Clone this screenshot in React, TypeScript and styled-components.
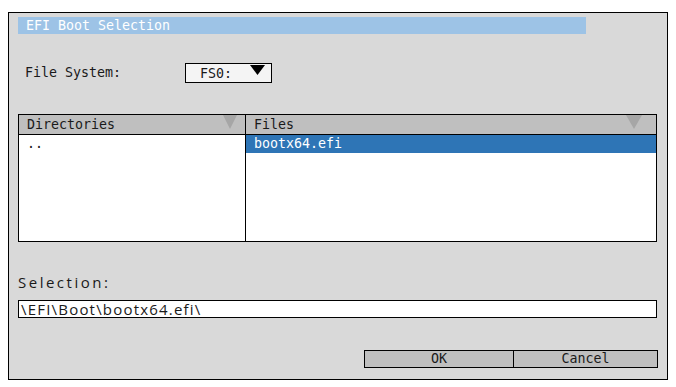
import styled, { createGlobalStyle } from 'styled-components';

const GlobalStyle = createGlobalStyle`
	html, body {
		margin: 0;
		padding: 0;
		background: #ffffff;
	}
	body {
		font-family: "DejaVu Sans Mono", monospace;
	}
`;

const Page = styled.div`
	padding: 12px 8px;
`;

const Dialog = styled.div`
	box-sizing: border-box;
	width: 660px;
	height: 368px;
	border: 1px solid #000;
	background: #d9d9d9;
	padding: 4px 10px 0 9px;
	display: flex;
	flex-direction: column;
	font-family: "DejaVu Sans Mono", monospace;
	font-size: 13.3px;
	color: #1a1a1a;
`;

const TitleBar = styled.div`
	width: 568px;
	height: 17px;
	line-height: 17px;
	background: #9dc3e6;
	color: #fff;
	padding-left: 8px;
	box-sizing: border-box;
`;

const FieldRow = styled.div`
	margin-top: 29px;
	height: 20px;
	display: flex;
	align-items: center;
	padding-left: 7px;
`;

const FieldLabel = styled.span`
	width: 160px;
	line-height: 20px;
`;

const Dropdown = styled.div`
	box-sizing: border-box;
	width: 87px;
	height: 20px;
	border: 1px solid #000;
	background: #f4f4f4;
	display: flex;
	align-items: flex-start;
	padding-left: 14px;
	line-height: 20px;
	gap: 18px;
`;

const Arrow = styled.svg`
	margin-top: 1px;
	flex: none;
`;

const Lists = styled.div`
	margin-top: 31px;
	box-sizing: border-box;
	width: 639px;
	height: 128px;
	border: 1px solid #000;
	background: #fff;
	display: grid;
	grid-template-columns: 227px 1fr;
`;

const Column = styled.div<{ $first?: boolean }>`
	display: flex;
	flex-direction: column;
	border-right: ${(p) => (p.$first ? '1px solid #000' : 'none')};
`;

const ColumnHeader = styled.div`
	position: relative;
	height: 19px;
	line-height: 19px;
	background: #bfbfbf;
	border-bottom: 1px solid #000;
	padding-left: 8px;
`;

const SortMark = styled.svg<{ $right: number }>`
	position: absolute;
	top: 0;
	right: ${(p) => p.$right}px;
`;

const Row = styled.div<{ $selected?: boolean }>`
	height: 18px;
	line-height: 18px;
	padding-left: 8px;
	background: ${(p) => (p.$selected ? '#2e75b6' : 'transparent')};
	color: ${(p) => (p.$selected ? '#fff' : '#1a1a1a')};
`;

const SelectionLabel = styled.div`
	margin-top: 30px;
	font-family: "Open Sans", sans-serif;
	font-size: 15px;
	letter-spacing: 2.5px;
	line-height: 20px;
`;

const PathInput = styled.div`
	margin-top: 8px;
	box-sizing: border-box;
	width: 639px;
	height: 18px;
	border: 1px solid #000;
	background: #fff;
	padding-left: 2px;
	font-family: "Open Sans", sans-serif;
	font-size: 15px;
	letter-spacing: 1.2px;
	line-height: 16px;
`;

const ButtonBar = styled.div`
	margin-top: 32px;
	align-self: flex-end;
	margin-right: -1px;
	display: flex;
	box-sizing: border-box;
	border: 1px solid #000;
	background: #bfbfbf;
`;

const Button = styled.div<{ $w: number }>`
	width: ${(p) => p.$w}px;
	height: 16px;
	line-height: 16px;
	text-align: center;
	& + & {
		border-left: 1px solid #000;
	}
`;

export default function App() {
	return (
		<>
			<GlobalStyle />
			<Page>
				<Dialog>
					<TitleBar>EFI Boot Selection</TitleBar>
					<FieldRow>
						<FieldLabel>File System:</FieldLabel>
						<Dropdown>
							<span>FS0:</span>
							<Arrow width="15" height="10" viewBox="0 0 15 10">
								<polygon points="0,0 15,0 7.5,10" fill="#000" />
							</Arrow>
						</Dropdown>
					</FieldRow>
					<Lists>
						<Column $first>
							<ColumnHeader>
								Directories
								<SortMark $right={8} width="14" height="14" viewBox="0 0 14 14">
									<polygon points="0,0 14,0 7,14" fill="#a6a6a6" />
								</SortMark>
							</ColumnHeader>
							<Row>..</Row>
						</Column>
						<Column>
							<ColumnHeader>
								Files
								<SortMark $right={14} width="16" height="14" viewBox="0 0 16 14">
									<polygon points="0,0 16,0 8,14" fill="#a6a6a6" />
								</SortMark>
							</ColumnHeader>
							<Row $selected>bootx64.efi</Row>
						</Column>
					</Lists>
					<SelectionLabel>Selection:</SelectionLabel>
					<PathInput>\EFI\Boot\bootx64.efi\</PathInput>
					<ButtonBar>
						<Button $w={148}>OK</Button>
						<Button $w={143}>Cancel</Button>
					</ButtonBar>
				</Dialog>
			</Page>
		</>
	);
}
